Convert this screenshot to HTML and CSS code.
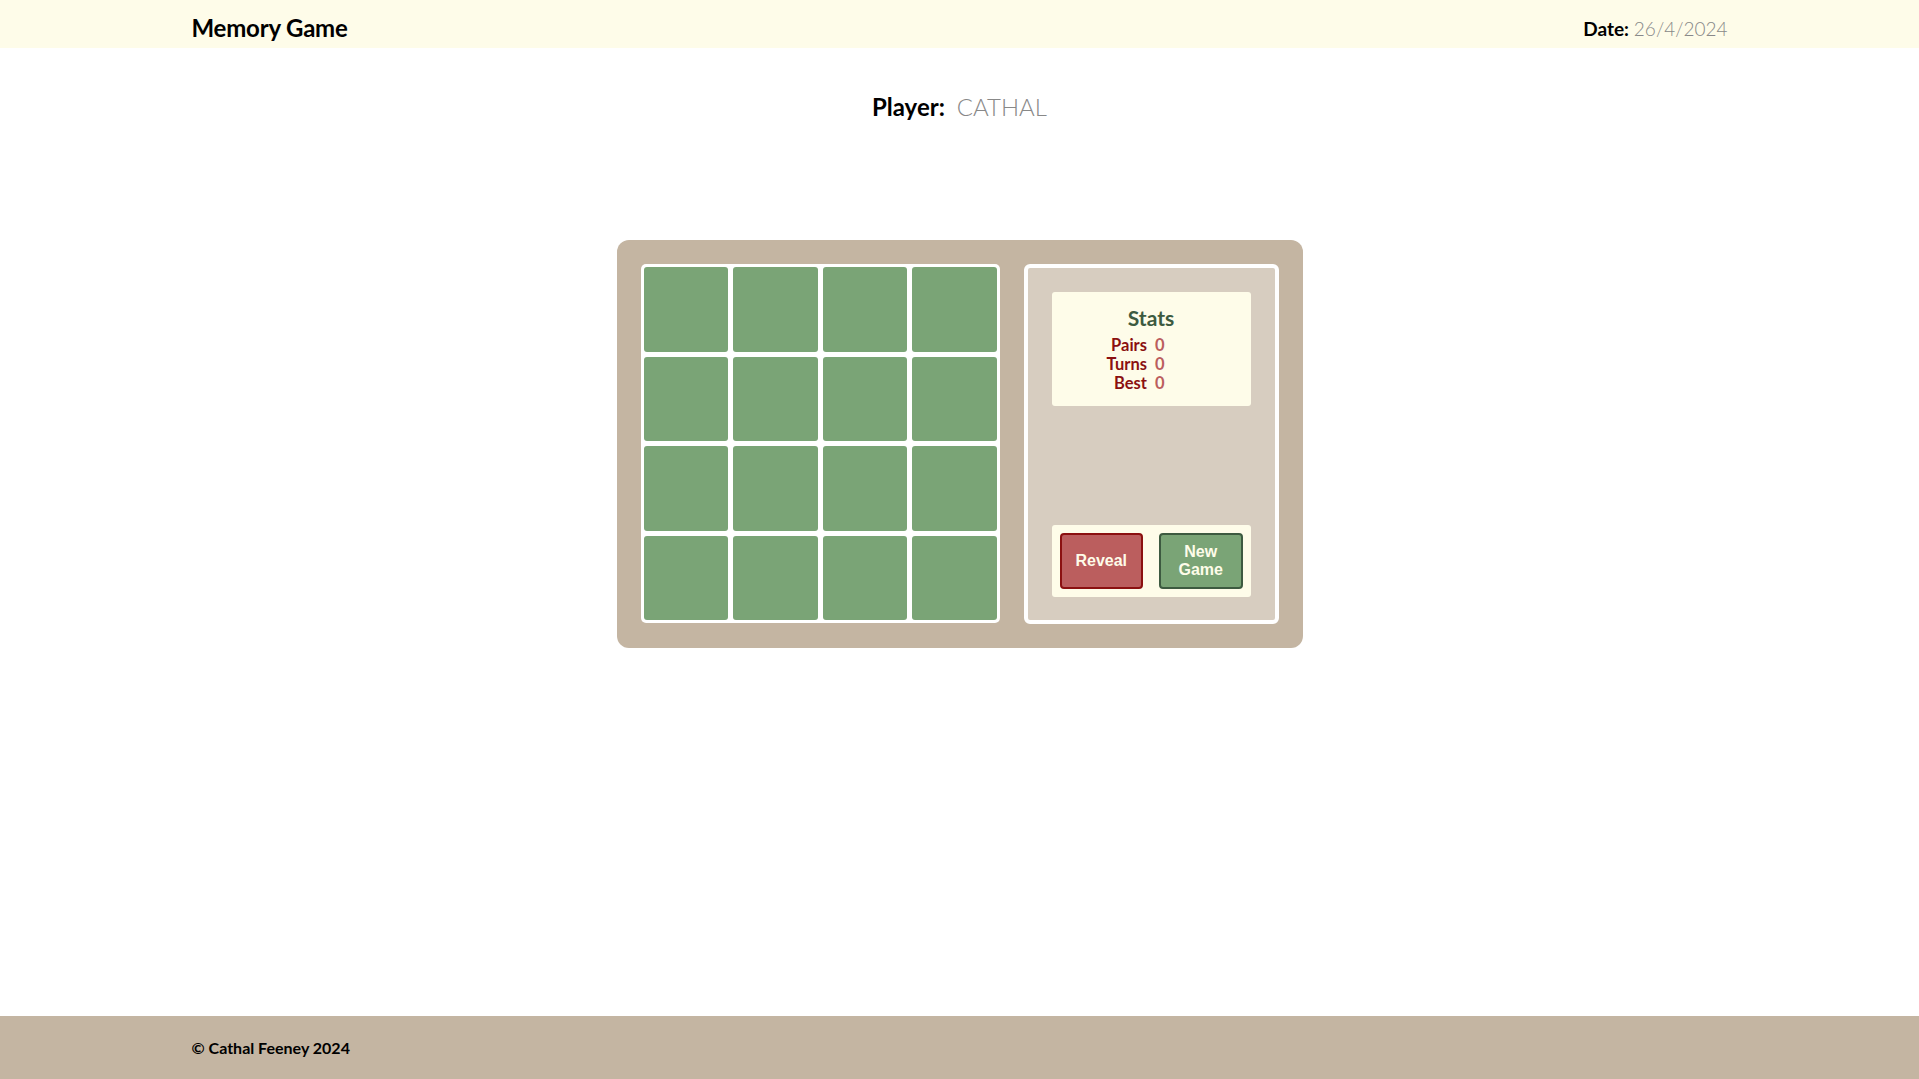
FILE: index.html
```html
<!DOCTYPE html>
<html lang="en">
<head>
<meta charset="utf-8">
<title>Memory Game</title>
<link rel="stylesheet" href="styles.css">
</head>
<body>
<div class="page">
  <header class="header">
    <div class="container header-inner">
      <h1 class="title">Memory Game</h1>
      <div class="date"><span class="date-label">Date:</span> <span class="date-value">26/4/2024</span></div>
    </div>
  </header>
  <main class="main">
    <div class="player"><span class="player-label">Player:</span><span class="player-name">CATHAL</span></div>
    <section class="board">
      <div class="grid">
        <div class="tile"></div><div class="tile"></div><div class="tile"></div><div class="tile"></div>
        <div class="tile"></div><div class="tile"></div><div class="tile"></div><div class="tile"></div>
        <div class="tile"></div><div class="tile"></div><div class="tile"></div><div class="tile"></div>
        <div class="tile"></div><div class="tile"></div><div class="tile"></div><div class="tile"></div>
      </div>
      <div class="panel">
        <div class="stats">
          <h2 class="stats-title">Stats</h2>
          <div class="stats-rows">
            <span class="stat-label">Pairs</span><span class="stat-value">0</span>
            <span class="stat-label">Turns</span><span class="stat-value">0</span>
            <span class="stat-label">Best</span><span class="stat-value">0</span>
          </div>
        </div>
        <div class="controls">
          <button class="btn btn-reveal">Reveal</button>
          <button class="btn btn-new">New Game</button>
        </div>
      </div>
    </section>
  </main>
  <footer class="footer">
    <div class="container footer-inner">© Cathal Feeney 2024</div>
  </footer>
</div>
</body>
</html>
```
FILE: styles.css
```css
* { box-sizing: border-box; }
html, body { margin: 0; padding: 0; }
body {
  font-family: "Lato", "Noto Sans", sans-serif;
  color: #000;
  background: #fff;
}
.page {
  min-height: 100vh;
  display: flex;
  flex-direction: column;
}
.container {
  width: 100%;
  max-width: 1536px;
  margin: 0 auto;
}
.header {
  background: #fefce9;
  height: 48px;
}
.header-inner {
  height: 100%;
  display: flex;
  align-items: center;
  justify-content: space-between;
}
.title {
  margin: 0;
  font-size: 24px;
  font-weight: 700;
  letter-spacing: -0.2px;
  padding-top: 6px;
}
.date {
  font-size: 19px;
  padding-top: 9px;
}
.date-label { font-weight: 700; }
.date-value { font-weight: 300; color: #888; }
.main {
  flex: 1;
  display: flex;
  flex-direction: column;
  align-items: center;
  padding-top: 44px;
}
.player {
  display: flex;
  gap: 12px;
  font-size: 24px;
  line-height: 30px;
}
.player-label { font-weight: 700; }
.player-name { font-weight: 300; color: #888; }
.board {
  margin-top: 118px;
  background: #c4b5a2;
  border-radius: 12px;
  padding: 24px;
  display: flex;
  gap: 24px;
}
.grid {
  width: 359px;
  height: 359px;
  background: #fff;
  border-radius: 5px;
  padding: 3px;
  display: grid;
  grid-template-columns: repeat(4, 1fr);
  grid-template-rows: repeat(4, 1fr);
  gap: 5px;
}
.tile {
  background: #7aa476;
  border-radius: 3px;
}
.panel {
  width: 255px;
  height: 360px;
  background: #d7cdc0;
  border: 4px solid #fff;
  border-radius: 6px;
  padding: 24px 24px 23px;
  display: flex;
  flex-direction: column;
  justify-content: space-between;
}
.stats {
  background: #fefce9;
  border-radius: 3px;
  height: 114px;
  padding-top: 12px;
  display: flex;
  flex-direction: column;
  align-items: center;
}
.stats-title {
  margin: 0 0 4px;
  font-size: 21px;
  font-weight: 700;
  color: #3d5a40;
  line-height: 28px;
}
.stats-rows {
  width: 100%;
  display: grid;
  grid-template-columns: 1fr 1fr;
  column-gap: 8px;
  font-size: 16.5px;
  font-weight: 700;
  line-height: 19px;
}
.stat-label { text-align: right; color: #8b1010; }
.stat-value { color: #bb5e5e; }
.controls {
  background: #fefce9;
  border-radius: 3px;
  padding: 8px;
  display: flex;
  gap: 16px;
}
.btn {
  width: 84px;
  height: 56px;
  border-radius: 4px;
  border: 2px solid;
  font-family: "Liberation Sans", Arial, sans-serif;
  font-weight: 700;
  font-size: 16px;
  line-height: 18px;
  color: #fefce9;
  padding: 0 10px;
  cursor: pointer;
}
.btn-reveal { background: #bb5e5e; border-color: #8b1010; }
.btn-new { background: #7aa476; border-color: #3d5a40; }
.footer {
  background: #c4b5a2;
  height: 63px;
}
.footer-inner {
  height: 100%;
  display: flex;
  align-items: center;
  font-size: 16px;
  font-weight: 700;
}
```
